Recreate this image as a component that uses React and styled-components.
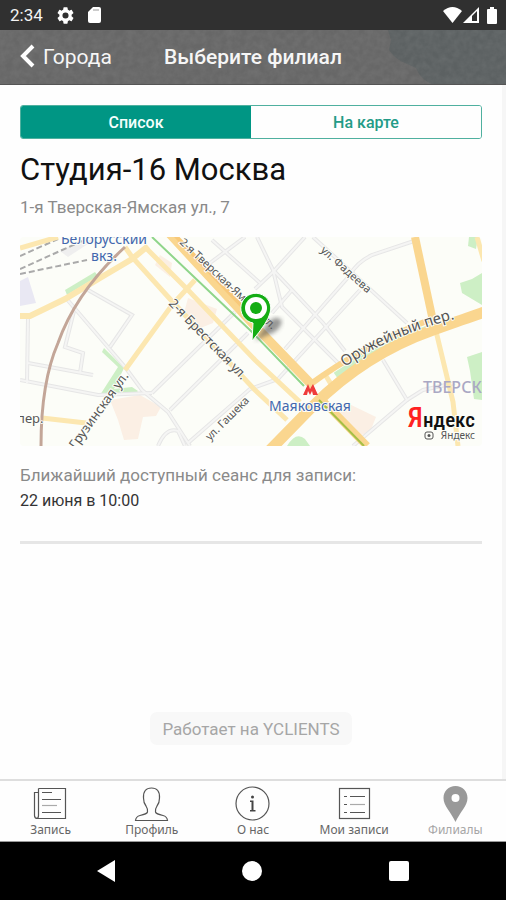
import React, { useState } from "react";
import styled, { createGlobalStyle } from "styled-components";

const GlobalStyle = createGlobalStyle`
  * {
    box-sizing: border-box;
  }

  body {
    margin: 0;
    background: #fefefe;
    font-family: Roboto, "Noto Sans", sans-serif;
  }

  button {
    padding: 0;
    border: none;
    background: none;
    font-family: inherit;
    cursor: pointer;
  }
`;

const Screen = styled.div`
  display: flex;
  flex-direction: column;
  min-height: 100vh;
`;

const StatusBar = styled.div`
  display: flex;
  align-items: center;
  justify-content: space-between;
  height: 30px;
  padding: 0 8px 0 10px;
  background: #303030;
  color: #f4f4f4;
  font-size: 17px;
`;

const StatusGroup = styled.div`
  display: flex;
  align-items: center;
  gap: ${(props) => props.$gap}px;

  svg {
    display: block;
  }
`;

const Header = styled.header`
  display: grid;
  height: 55px;
  border-bottom: 1px solid #555;
  background: #686868;
  overflow: hidden;

  > * {
    grid-area: 1 / 1;
  }
`;

const Texture = styled.svg`
  width: 100%;
  height: 54px;
`;

const HeaderRow = styled.div`
  display: grid;
  grid-template-columns: 1fr auto 1fr;
  align-items: center;
  z-index: 1;
  padding: 0 20px;
  color: #f6f6f6;
`;

const BackButton = styled.button`
  display: flex;
  align-items: center;
  gap: 8px;
  color: inherit;
  font-size: 21px;
  line-height: 24px;
`;

const Title = styled.h1`
  margin: 0;
  font-size: 21px;
  line-height: 24px;
  font-weight: 500;
`;

const Content = styled.main`
  display: flex;
  flex: 1;
  flex-direction: column;
  padding: 20px 20px 34px;
  border-right: 4px solid #f6f6f6;
`;

const Segment = styled.div`
  display: grid;
  grid-template-columns: 1fr 1fr;
  height: 34px;
  border: 1px solid #4fb09f;
  border-radius: 3px;
  overflow: hidden;
`;

const SegmentButton = styled.button`
  background: ${(props) => (props.$active ? "#009684" : "#fefefe")};
  color: ${(props) => (props.$active ? "#f4fffc" : "#239b87")};
  font-size: 16px;
  font-weight: 500;
`;

const Branch = styled.article`
  display: flex;
  flex-direction: column;
  padding-bottom: 28px;
  border-bottom: 3px solid #e6e6e6;
`;

const BranchName = styled.h2`
  margin: 13px 0 0;
  color: #111;
  font-size: 31px;
  line-height: 36px;
  font-weight: 400;
`;

const Note = styled.p`
  margin: ${(props) => props.$top}px 0 0;
  color: #8a8a8a;
  font-size: 17px;
  line-height: 24px;
`;

const NextTime = styled.time`
  margin-top: 2px;
  color: #333;
  font-size: 16px;
  line-height: 24px;
`;

const MapView = styled.svg`
  display: block;
  width: 100%;
  margin-top: 18px;
  border-radius: 4px;
  background: #fcfdf8;
  font-family: "Noto Sans", "Open Sans", sans-serif;
`;

const Street = styled.text`
  fill: #555;
  font-size: ${(props) => props.$size || 12}px;
  paint-order: stroke;
  stroke: #fcfdf8;
  stroke-width: 2px;
`;

const Place = styled(Street)`
  fill: #4267ae;
  text-anchor: middle;
`;

const PoweredBy = styled.a`
  align-self: center;
  margin-top: auto;
  padding: 5px 12px 4px;
  border-radius: 7px;
  background: #f8f8f8;
  color: #a6a6a6;
  font-size: 17px;
  line-height: 24px;
  text-decoration: none;
`;

const TabBar = styled.nav`
  display: grid;
  grid-template-columns: repeat(5, 1fr);
  height: 63px;
  border-top: 2px solid #dedede;
  border-bottom: 1px solid #999;
  background: #fefefe;
`;

const Tab = styled.button`
  display: flex;
  flex-direction: column;
  align-items: center;
  gap: 1px;
  padding-top: 5px;
  color: ${(props) => (props.$active ? "#a6a6a6" : "#666")};
  font-family: "Noto Sans", sans-serif;
  font-size: 12px;
  line-height: 14px;
  white-space: nowrap;

  svg {
    display: block;
    flex: none;
  }
`;

const SystemBar = styled.div`
  display: flex;
  align-items: center;
  justify-content: space-around;
  height: 58px;
  padding: 0 34px;
  background: #000;

  svg {
    display: block;
  }
`;

const GREY_STREETS = [
  "M45 60L105 130L122 153L148 175L170 209",
  "M68 53L112 78L90 110",
  "M55 70L45 110L63 116L60 136",
  "M8 80L7 146",
  "M0 143L78 158L132 156",
  "M8 126L73 138",
  "M132 156L215 75",
  "M150 173L228 96",
  "M138 209Q146 190 158 194L165 209",
  "M192 3L240 46",
  "M225 0L190 26",
  "M168 206L230 152L258 142L340 53",
  "M237 0L253 33L272 53L303 86L325 114",
  "M285 0L253 35L235 52",
  "M253 33L262 70L320 128",
  "M293 0L387 86",
  "M397 3L352 18Q336 26 330 38L265 112",
  "M272 53L252 76",
  "M363 123L387 163L333 209",
  "M387 163L403 153L435 146",
];

function StreetMap() {
  return (
    <MapView viewBox="0 0 462 209" role="img" aria-label="Карта филиала">
      {/* parks, buildings, blocks */}
      <g fill="#cdefc5">
        <path d="M45 53L75 35L78 39L47 58Z" />
        <path d="M84 111L104 131L94 152L112 150L118 154L114 158L80 158L98 130L82 115Z" />
        <path d="M440 46L452 42L462 36V68L452 62L442 56Z" />
        <path d="M447 120L462 115V163L454 162L450 134Z" />
        <path d="M449 0H458L456 12L448 9Z" />
        <path d="M267 209Q276 194 285 202L290 209Z" />
      </g>
      <g fill="#fbefe4">
        <path d="M90 163L120 158L141 170L136 179L123 180L118 202L104 203L98 183Z" />
        <path d="M168 61L197 72L193 86L178 92L164 76Z" />
        <path d="M325 165L356 180L350 195L336 200L318 180Z" />
        <path d="M140 18L152 26L150 40L135 28Z" />
      </g>
      <path d="M0 44L8 40L16 66L0 69Z" fill="#e9e8f3" />
      <path d="M40 14L62 3H74L48 20Z" fill="#efefef" />

      <g fill="none">
        {GREY_STREETS.map((d) => (
          <path key={d} d={d} stroke="#e6e6e6" strokeWidth="4" />
        ))}
        {GREY_STREETS.map((d) => (
          <path key={d} d={d} stroke="#f5f5f4" strokeWidth="2" />
        ))}

        {/* railways */}
        <g stroke="#aaa" strokeWidth="2" strokeDasharray="6 3">
          <path d="M0 19L38 2" />
          <path d="M0 32L40 14L62 4" />
          <path d="M0 37L67 23" />
        </g>

        {/* yellow streets */}
        <g stroke="#fce7b0" strokeWidth="5">
          <path d="M0 79H10L45 62L80 41L112 22L128 9" strokeWidth="6" />
          <path d="M0 11L38 0" />
          <path d="M105 10L112 20L150 62L235 153L267 183" />
          <path d="M125 10L168 53L235 123L280 165" />
          <path d="M175 43L152 68L105 133" />
          <path d="M22 181L66 186" />
          <path d="M415 90L433 165L438 209" />
          <path d="M457 0L464 24" />
          <path d="M306 139L314 152" />
        </g>

        {/* main roads */}
        <path d="M316 139Q362 108 412 91" stroke="#cdefc5" strokeWidth="8" />
        <g stroke="#fad68f">
          <path d="M395 0L413 84" strokeWidth="8" />
          <path d="M288 149Q345 107 412 82" strokeWidth="6" />
          <path d="M249 214L293 169Q345 117 413 93T466 75" strokeWidth="11" />
          <path d="M149 -4L232 86L290 146" strokeWidth="9" />
          <path d="M299 160L347 209" strokeWidth="8" />
        </g>
        <path d="M153 -4L236 84" stroke="#f8c979" strokeWidth="4" />
        <path d="M132 0L232 95L284 149" stroke="#8fd58a" strokeWidth="2" />
        <path d="M299 163L344 209" stroke="#a5bf45" strokeWidth="2" />
        <path
          d="M21 209Q21 145 38 106Q56 55 105 10"
          stroke="#c3a698"
          strokeWidth="3"
        />
      </g>

      <Place x="84" y="7" $size="14">Белорусский</Place>
      <Place x="84" y="24" $size="14">вкз.</Place>
      <Street transform="translate(159 6) rotate(43)" $size="11">
        2-я Тверская-Ямская ул.
      </Street>
      <Street transform="translate(148 67) rotate(46)" $size="13">
        2-я Брестская ул.
      </Street>
      <Street transform="translate(109 139) rotate(-54)" $size="13" textAnchor="end">
        Грузинская ул.
      </Street>
      <Street transform="translate(190 204) rotate(-45)" $size="11">
        ул. Гашека
      </Street>
      <Street x="-3" y="186" $size="13">пер.</Street>
      <Street transform="translate(300 14) rotate(42)" $size="11">
        ул. Фадеева
      </Street>
      <path id="ring" d="M325 130Q370 98 442 80" fill="none" />
      <Street $size="15">
        <textPath href="#ring">Оружейный пер.</textPath>
      </Street>
      <path
        d="M283 158L288 147L290 152L293 147L298 158H293L292 154L290 158L288 154L287 158Z"
        fill="#ef3b3b"
      />
      <Place x="290" y="174" $size="14">Маяковская</Place>
      <text x="403" y="156" fill="#aaa8c4" fontSize="16" fontWeight="500">
        ТВЕРСКОЙ
      </text>

      <Street
        x="455"
        y="190"
        $size="21"
        textAnchor="end"
        fontFamily="'Roboto Condensed', 'Liberation Sans Narrow', Roboto, sans-serif"
        fontWeight="500"
      >
        <tspan fill="#f22" fontSize="28">Я</tspan>
        <tspan fill="#111">ндекс</tspan>
      </Street>
      <Street x="455" y="202" $size="10" textAnchor="end">Яндекс</Street>
      <rect x="405" y="195" width="8" height="7" rx="2" fill="none" stroke="#555" />
      <circle cx="409" cy="198.500" r="1.500" fill="#555" />

      {/* branch pin */}
      <defs>
        <filter id="soft">
          <feGaussianBlur stdDeviation="2" />
        </filter>
      </defs>
      <path
        d="M235 104L246 88Q256 76 262 84Q260 95 247 98Z"
        fill="#555"
        opacity="0.6"
        filter="url(#soft)"
      />
      <path
        d="M232 104L233 86A15 15 0 1 1 250 76Q248 85 232 104Z"
        fill="#14ad14"
        stroke="#fff"
        strokeWidth="1"
      />
      <circle cx="236" cy="71" r="11" fill="#fff" />
      <circle cx="236" cy="71" r="6" fill="#14ad14" />
    </MapView>
  );
}

function HeaderTexture() {
  return (
    <Texture viewBox="0 0 506 54" preserveAspectRatio="none" aria-hidden="true">
      <filter id="grain" x="0" y="0" width="100%" height="100%">
        <feTurbulence type="fractalNoise" baseFrequency="0.15" numOctaves="3" />
        <feColorMatrix values="0 0 0 0 1  0 0 0 0 1  0 0 0 0 1  0.4 0 0 0 -0.1" />
      </filter>
      <rect width="506" height="54" fill="#676767" />
      <path
        d="M388 0L391 10L389 20Q396 30 405 33L416 38Q421 50 432 54H506V0Z"
        fill="#5c6162"
      />
      <rect width="506" height="54" filter="url(#grain)" opacity="0.25" />
    </Texture>
  );
}

const line = { fill: "none", stroke: "#555", strokeWidth: 1.2 };

const TABS = [
  {
    label: "Запись",
    icon: (
      <g {...line}>
        <path d="M5.500 2.500H32.500V32.500H4.500Q1.500 32.500 1.500 29.500V6.500H5.500" />
        <path d="M5.500 2.500V29.500Q5.500 32.500 3.500 32.500" />
        <path d="M9 6.500H19M9 13.500H28M9 26.500H28" />
        <path d="M9 19.500H24" stroke="#aaa" />
      </g>
    ),
  },
  {
    label: "Профиль",
    icon: (
      <path
        {...line}
        d="M1.500 34.500Q2 30.500 6 29.500Q13 28 13.500 26Q14 23 12 20Q9.500 17 9.500 12Q9 2 17.500 2Q26 2 25.500 12Q25.500 17 23 20Q21 23 21.500 26Q22 28 29 29.500Q33 30.500 33.500 34.500Z"
      />
    ),
  },
  {
    label: "О нас",
    icon: (
      <g>
        <circle {...line} cx="17.500" cy="17.500" r="16.500" />
        <circle cx="17.500" cy="11" r="1.500" fill="#444" />
        <path d="M15 14.500H18.500V24H20.500V25.500H15V24H16.500V16H15Z" fill="#444" />
      </g>
    ),
  },
  {
    label: "Мои записи",
    icon: (
      <g {...line}>
        <rect x="2.500" y="2.500" width="30" height="30" />
        <path d="M7 10.500H10M13 10.500H28M7 18.500H10M7 26.500H10M13 26.500H28" />
        <path d="M13 18.500H28" stroke="#aaa" />
      </g>
    ),
  },
  {
    label: "Филиалы",
    icon: (
      <path
        fill="#999"
        fillRule="evenodd"
        d="M17.500 0C10.500 0 5.500 5 5.500 12C5.500 20 13 26 17.500 36C22 26 29.500 20 29.500 12C29.500 5 24.500 0 17.500 0ZM17.500 8A4 4 0 1 1 17.500 16A4 4 0 1 1 17.500 8Z"
      />
    ),
  },
];

function App() {
  const [view, setView] = useState("Список");
  const [tab, setTab] = useState("Филиалы");

  return (
    <Screen>
      <GlobalStyle />
      <StatusBar>
        <StatusGroup $gap={14}>
          <span>2:34</span>
          <svg width="17" height="17" viewBox="2 2 20 20" fill="#fff">
            <path d="M19.140 12.940c.040-.3.060-.610.060-.940s-.020-.640-.070-.940l2.030-1.580a.49.49 0 0 0 .120-.610l-1.920-3.320a.49.49 0 0 0-.590-.220l-2.390.960a7 7 0 0 0-1.620-.940l-.360-2.540a.48.48 0 0 0-.480-.410h-3.840a.47.47 0 0 0-.470.410l-.360 2.540a7.300 7.300 0 0 0-1.620.940l-2.390-.960a.47.47 0 0 0-.590.220L2.740 8.870a.47.47 0 0 0 .120.610l2.030 1.580a6 6 0 0 0 0 1.880l-2.030 1.580a.49.49 0 0 0-.120.610l1.920 3.320c.120.220.370.290.590.220l2.390-.960c.5.380 1.030.700 1.620.940l.360 2.540c.050.240.240.410.480.410h3.840c.240 0 .440-.170.470-.410l.360-2.540a7 7 0 0 0 1.620-.940l2.390.960c.220.080.470 0 .590-.220l1.920-3.320a.47.47 0 0 0-.120-.610zM12 15.600A3.600 3.600 0 1 1 12 8.400a3.600 3.600 0 0 1 0 7.200z" />
          </svg>
          <svg width="13" height="16" viewBox="0 0 13 16">
            <path d="M5 0H11Q13 0 13 2V14Q13 16 11 16H2Q0 16 0 14V5Z" fill="#fff" />
            <path d="M5 3H11" stroke="#999" />
          </svg>
        </StatusGroup>
        <StatusGroup $gap={1}>
          <svg width="19" height="16" viewBox="0 0 19 16">
            <path d="M0 4Q9.500 -4 19 4L9.500 16Z" fill="#fff" />
          </svg>
          <svg width="16" height="16" viewBox="0 0 16 16">
            <path d="M0 16L16 0V16Z" fill="#fff" />
            <path d="M9 14V9L14 4V14Z" fill="#303030" />
          </svg>
          <svg width="18" height="17" viewBox="0 0 18 17">
            <path d="M10 0H14V2H16Q17 2 17 3V16Q17 17 16 17H8Q7 17 7 16V3Q7 2 8 2H10Z" fill="#fff" />
          </svg>
        </StatusGroup>
      </StatusBar>

      <Header>
        <HeaderTexture />
        <HeaderRow>
          <BackButton>
            <svg width="15" height="26" viewBox="0 0 15 26" aria-hidden="true">
              <path d="M13 2L3 12L13 22" fill="none" stroke="#fff" strokeWidth="4" />
            </svg>
            Города
          </BackButton>
          <Title>Выберите филиал</Title>
        </HeaderRow>
      </Header>

      <Content>
        <Segment>
          {["Список", "На карте"].map((name) => (
            <SegmentButton
              key={name}
              $active={view === name}
              aria-pressed={view === name}
              onClick={() => setView(name)}
            >
              {name}
            </SegmentButton>
          ))}
        </Segment>
        <Branch>
          <BranchName>Студия-16 Москва</BranchName>
          <Note $top={7}>1-я Тверская-Ямская ул., 7</Note>
          <StreetMap />
          <Note $top={17}>Ближайший доступный сеанс для записи:</Note>
          <NextTime>22 июня в 10:00</NextTime>
        </Branch>
        <PoweredBy href="#yclients">Работает на YCLIENTS</PoweredBy>
      </Content>

      <TabBar>
        {TABS.map(({ label, icon }) => (
          <Tab key={label} $active={tab === label} onClick={() => setTab(label)}>
            <svg width="35" height="36" viewBox="0 0 35 36" aria-hidden="true">
              {icon}
            </svg>
            {label}
          </Tab>
        ))}
      </TabBar>

      <SystemBar>
        <button aria-label="Назад">
          <svg width="18" height="22" viewBox="0 0 18 22">
            <path d="M18 0V22L0 11Z" fill="#fff" />
          </svg>
        </button>
        <button aria-label="Домой">
          <svg width="20" height="20" viewBox="0 0 20 20">
            <circle cx="10" cy="10" r="10" fill="#fff" />
          </svg>
        </button>
        <button aria-label="Обзор">
          <svg width="20" height="20" viewBox="0 0 20 20">
            <rect width="20" height="20" rx="2" fill="#fff" />
          </svg>
        </button>
      </SystemBar>
    </Screen>
  );
}

export default App;
